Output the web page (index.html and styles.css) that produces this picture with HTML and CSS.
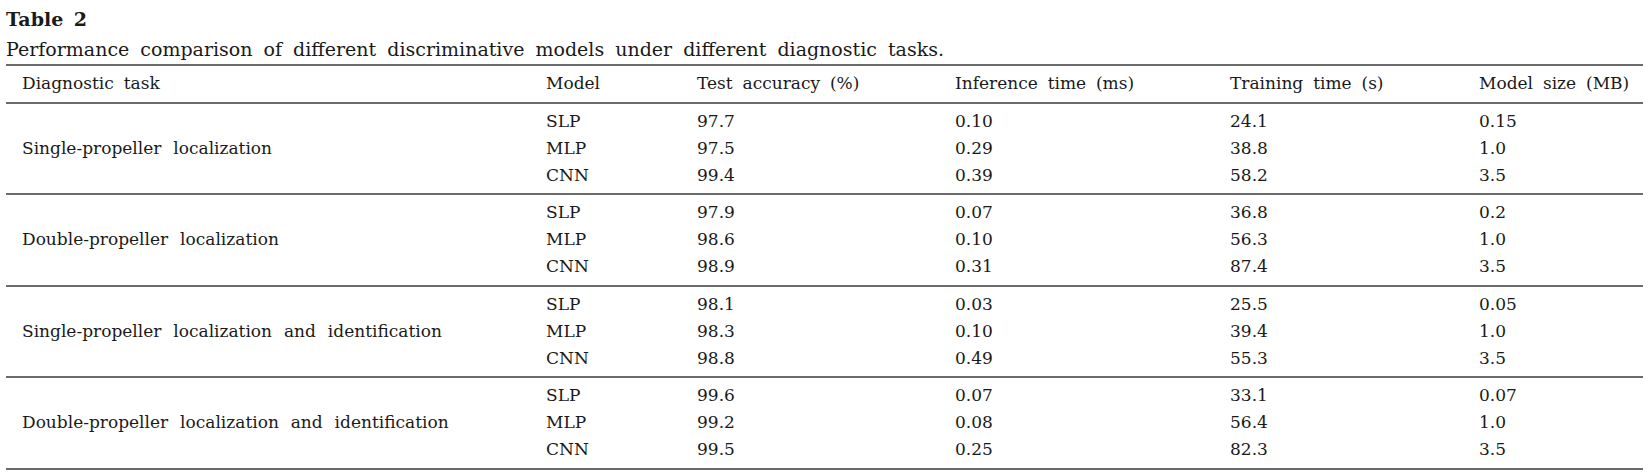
FILE: index.html
```html
<!DOCTYPE html>
<html lang="en">
<head>
<meta charset="utf-8">
<title>Table 2</title>
<link rel="stylesheet" href="styles.css">
</head>
<body>
<div class="wrap">
  <div class="label">Table 2</div>
  <div class="caption">Performance comparison of different discriminative models under different diagnostic tasks.</div>
  <div class="tbl">
    <div class="row head">
      <div class="c task">Diagnostic task</div>
      <div class="c">Model</div>
      <div class="c">Test accuracy (%)</div>
      <div class="c">Inference time (ms)</div>
      <div class="c">Training time (s)</div>
      <div class="c">Model size (MB)</div>
    </div>

    <div class="group">
      <div class="c task span">Single-propeller localization</div>
      <div class="c">SLP</div><div class="c">97.7</div><div class="c">0.10</div><div class="c">24.1</div><div class="c">0.15</div>
      <div class="c">MLP</div><div class="c">97.5</div><div class="c">0.29</div><div class="c">38.8</div><div class="c">1.0</div>
      <div class="c">CNN</div><div class="c">99.4</div><div class="c">0.39</div><div class="c">58.2</div><div class="c">3.5</div>
    </div>

    <div class="group">
      <div class="c task span">Double-propeller localization</div>
      <div class="c">SLP</div><div class="c">97.9</div><div class="c">0.07</div><div class="c">36.8</div><div class="c">0.2</div>
      <div class="c">MLP</div><div class="c">98.6</div><div class="c">0.10</div><div class="c">56.3</div><div class="c">1.0</div>
      <div class="c">CNN</div><div class="c">98.9</div><div class="c">0.31</div><div class="c">87.4</div><div class="c">3.5</div>
    </div>

    <div class="group">
      <div class="c task span">Single-propeller localization and identification</div>
      <div class="c">SLP</div><div class="c">98.1</div><div class="c">0.03</div><div class="c">25.5</div><div class="c">0.05</div>
      <div class="c">MLP</div><div class="c">98.3</div><div class="c">0.10</div><div class="c">39.4</div><div class="c">1.0</div>
      <div class="c">CNN</div><div class="c">98.8</div><div class="c">0.49</div><div class="c">55.3</div><div class="c">3.5</div>
    </div>

    <div class="group">
      <div class="c task span">Double-propeller localization and identification</div>
      <div class="c">SLP</div><div class="c">99.6</div><div class="c">0.07</div><div class="c">33.1</div><div class="c">0.07</div>
      <div class="c">MLP</div><div class="c">99.2</div><div class="c">0.08</div><div class="c">56.4</div><div class="c">1.0</div>
      <div class="c">CNN</div><div class="c">99.5</div><div class="c">0.25</div><div class="c">82.3</div><div class="c">3.5</div>
    </div>
  </div>
</div>
</body>
</html>
```

FILE: styles.css
```css
html, body {
  margin: 0;
  padding: 0;
  background: #ffffff;
}

body {
  font-family: "DejaVu Serif", "Liberation Serif", serif;
  color: #1a1a1a;
}

.wrap {
  padding: 3.5px 0 0 6px;
  width: 1637px;
}

.label {
  font-size: 19px;
  font-weight: bold;
  line-height: 30px;
  word-spacing: 4px;
}

.caption {
  font-size: 19px;
  line-height: 30px;
  word-spacing: 5px;
}

.tbl {
  border-top: 2px solid #6a6a6a;
  font-size: 17px;
  word-spacing: 4.5px;
}

.row,
.group {
  display: grid;
  grid-template-columns: 540px 151px 258px 275px 249px 1fr;
  border-bottom: 2px solid #6a6a6a;
}

.row {
  height: 36px;
  line-height: 35px;
}

.group {
  grid-template-rows: repeat(3, 27px);
  line-height: 27px;
  padding: 4.25px 0;
}

.c {
  white-space: nowrap;
}

.task {
  padding-left: 16px;
}

.span {
  grid-row: 1 / span 3;
  align-self: center;
}

.group .task {
  word-spacing: 6.5px;
}
```
